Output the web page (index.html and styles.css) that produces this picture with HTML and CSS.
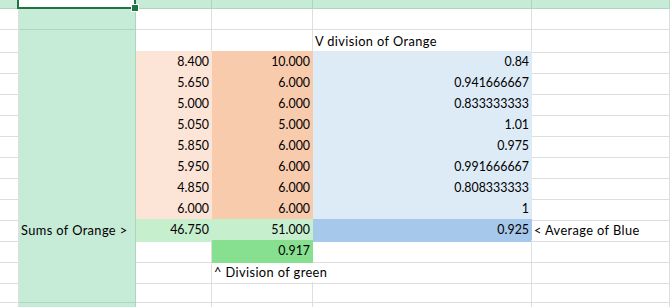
FILE: index.html
```html
<!DOCTYPE html>
<html lang="en">
<head>
    <meta charset="UTF-8">
    <meta name="viewport" content="width=device-width, initial-scale=1.0">
    <title>Sheet</title>
    <link rel="stylesheet" href="styles.css">
</head>
<body>
    <div class="sheet">
        <!-- row 1: whole row selected, B1 is the active cell -->
        <div class="row first">
            <div class="cell sel"></div>
            <div class="cell active-cell"></div>
            <div class="cell sel"></div>
            <div class="cell sel"></div>
            <div class="cell sel"></div>
            <div class="cell sel"></div>
        </div>
        <div class="row">
            <div class="cell"></div>
            <div class="cell sel"></div>
            <div class="cell"></div>
            <div class="cell"></div>
            <div class="cell"></div>
            <div class="cell"></div>
        </div>
        <div class="row">
            <div class="cell"></div>
            <div class="cell sel"></div>
            <div class="cell"></div>
            <div class="cell"></div>
            <div class="cell label">V division of Orange</div>
            <div class="cell"></div>
        </div>
        <div class="row">
            <div class="cell"></div>
            <div class="cell sel"></div>
            <div class="cell num peach">8.400</div>
            <div class="cell num orange">10.000</div>
            <div class="cell num sky">0.84</div>
            <div class="cell"></div>
        </div>
        <div class="row">
            <div class="cell"></div>
            <div class="cell sel"></div>
            <div class="cell num peach">5.650</div>
            <div class="cell num orange">6.000</div>
            <div class="cell num sky">0.941666667</div>
            <div class="cell"></div>
        </div>
        <div class="row">
            <div class="cell"></div>
            <div class="cell sel"></div>
            <div class="cell num peach">5.000</div>
            <div class="cell num orange">6.000</div>
            <div class="cell num sky">0.833333333</div>
            <div class="cell"></div>
        </div>
        <div class="row">
            <div class="cell"></div>
            <div class="cell sel"></div>
            <div class="cell num peach">5.050</div>
            <div class="cell num orange">5.000</div>
            <div class="cell num sky">1.01</div>
            <div class="cell"></div>
        </div>
        <div class="row">
            <div class="cell"></div>
            <div class="cell sel"></div>
            <div class="cell num peach">5.850</div>
            <div class="cell num orange">6.000</div>
            <div class="cell num sky">0.975</div>
            <div class="cell"></div>
        </div>
        <div class="row">
            <div class="cell"></div>
            <div class="cell sel"></div>
            <div class="cell num peach">5.950</div>
            <div class="cell num orange">6.000</div>
            <div class="cell num sky">0.991666667</div>
            <div class="cell"></div>
        </div>
        <div class="row">
            <div class="cell"></div>
            <div class="cell sel"></div>
            <div class="cell num peach">4.850</div>
            <div class="cell num orange">6.000</div>
            <div class="cell num sky">0.808333333</div>
            <div class="cell"></div>
        </div>
        <div class="row">
            <div class="cell"></div>
            <div class="cell sel"></div>
            <div class="cell num peach">6.000</div>
            <div class="cell num orange">6.000</div>
            <div class="cell num sky">1</div>
            <div class="cell"></div>
        </div>
        <div class="row">
            <div class="cell"></div>
            <div class="cell sel label">Sums of Orange &gt;</div>
            <div class="cell num mint">46.750</div>
            <div class="cell num mint">51.000</div>
            <div class="cell num blue">0.925</div>
            <div class="cell label">&lt; Average of Blue</div>
        </div>
        <div class="row">
            <div class="cell"></div>
            <div class="cell sel"></div>
            <div class="cell"></div>
            <div class="cell num green">0.917</div>
            <div class="cell"></div>
            <div class="cell"></div>
        </div>
        <div class="row">
            <div class="cell"></div>
            <div class="cell sel"></div>
            <div class="cell"></div>
            <div class="cell label spill">^ Division of green</div>
            <div class="cell"></div>
            <div class="cell"></div>
        </div>
        <div class="row">
            <div class="cell"></div>
            <div class="cell sel"></div>
            <div class="cell"></div>
            <div class="cell"></div>
            <div class="cell"></div>
            <div class="cell"></div>
        </div>
        <div class="row">
            <div class="cell"></div>
            <div class="cell sel"></div>
            <div class="cell"></div>
            <div class="cell"></div>
            <div class="cell"></div>
            <div class="cell"></div>
        </div>

        <div class="cursor">
            <span class="handle"></span>
        </div>
    </div>
</body>
</html>
```

FILE: styles.css
```css
:root {
    --grid: #dedede;
    --sel: #c6ebd6;
    --sel-line: #abd8bd;
    --accent: #217346;
}

* {
    box-sizing: border-box;
    margin: 0;
    padding: 0;
}

body {
    background: white;
    font-family: 'Lato', 'Open Sans', sans-serif;
    font-size: 12.4px;
    color: #000;
    overflow: hidden;
}

.sheet {
    position: relative;
    width: 670px;
    height: 307px;
    overflow: hidden;
}

.row {
    display: grid;
    grid-template-columns: 19px 117px 76px 101px 219px 1fr;
    height: 21px;
}

.row.first {
    height: 9px;
}

.cell {
    border-right: 1px solid var(--grid);
    border-bottom: 1px solid var(--grid);
    padding: 0 2px;
    line-height: 22px;
    white-space: nowrap;
}

.row.first .cell {
    line-height: 9px;
}

.num {
    text-align: right;
}

.label {
    font-size: 12.8px;
    letter-spacing: 0.4px;
}

/* selection tint */
.sel {
    background: var(--sel);
    border-color: var(--sel-line);
}

.active-cell {
    background: white;
}

/* filled cells hide their gridlines */
.peach  { background: #fce4d6; border-color: #fce4d6; }
.orange { background: #f8cbad; border-color: #f8cbad; }
.sky    { background: #ddebf7; border-color: #ddebf7; }
.mint   { background: #c6efce; border-color: #c6efce; }
.blue   { background: #a6c8eb; border-color: #a6c8eb; }
.green  { background: #86e08f; border-color: #86e08f; }

/* text running into the next cell */
.spill {
    overflow: visible;
    border-right-color: transparent;
    position: relative;
    z-index: 1;
}

.cursor {
    position: absolute;
    left: 17px;
    top: -3px;
    width: 119px;
    height: 12px;
    border: 2px solid var(--accent);
}

.handle {
    position: absolute;
    right: -4px;
    bottom: -4px;
    width: 6px;
    height: 6px;
    background: var(--accent);
    box-shadow: 0 0 0 1px white;
}
```
